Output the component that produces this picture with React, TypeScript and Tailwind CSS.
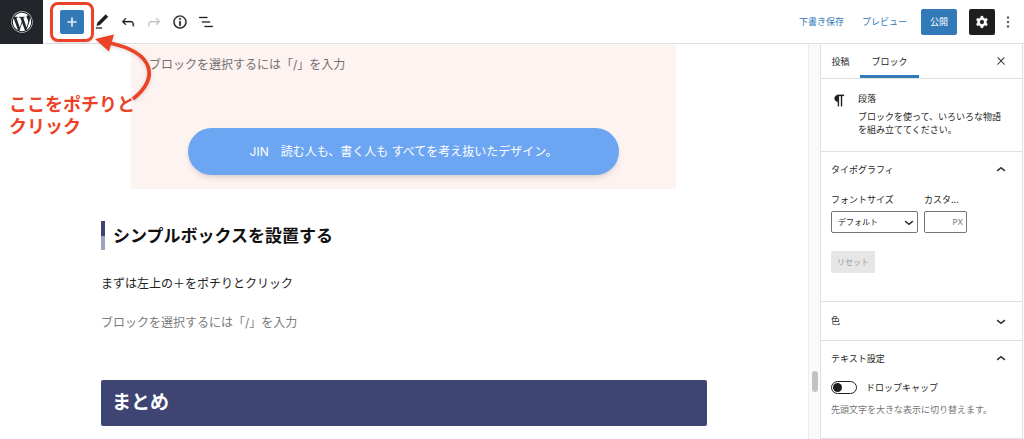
import React from "react";
import { FaWordpress } from "react-icons/fa";

const paths = {
  plus: "M18 11.2h-5.2V6h-1.6v5.2H6v1.6h5.2V18h1.6v-5.2H18z",
  edit: "M20.1 5.1L16.9 2 6.2 12.7l-1.3 4.4 4.5-1.3L20.1 5.1zM4 20.8h8v-1.5H4v1.5z",
  undo: "M18.3 11.7c-.6-.6-1.4-.9-2.3-.9H6.7l2.9-3.3-1.1-1-4.5 5L8.5 16l1-1-2.7-2.7H16c.5 0 .9.2 1.3.5 1 1 1 3.4 1 4.5v.3h1.5v-.2c0-1.5 0-4.3-1.5-5.7z",
  redo: "M15.6 6.5l-1.1 1 2.9 3.3H8c-.9 0-1.7.3-2.3.9-1.4 1.5-1.4 4.2-1.4 5.6v.2h1.5v-.3c0-1.1 0-3.5 1-4.5.3-.3.7-.5 1.3-.5h9.2L14.5 15l1.1 1.1 4.6-4.6-4.6-5z",
  info: "M12 3.2c-4.8 0-8.8 3.9-8.8 8.8 0 4.8 3.9 8.8 8.8 8.8 4.8 0 8.8-3.9 8.8-8.8 0-4.8-4-8.8-8.8-8.8zm0 16c-4 0-7.2-3.3-7.2-7.2C4.8 8 8 4.8 12 4.8s7.2 3.3 7.2 7.2c0 4-3.2 7.2-7.2 7.2zM11 17h2v-6h-2v6zm0-8h2V7h-2v2z",
  list: "M13.8 5.2H3v1.5h10.8V5.2zm-3.6 12v1.5H21v-1.5H10.2zm7.2-6H6.6v1.5h10.8v-1.5z",
  cog: "M10.289 4.836A1 1 0 0111.275 4h1.306a1 1 0 01.987.836l.244 1.466c.787.26 1.503.679 2.108 1.218l1.393-.522a1 1 0 011.216.437l.653 1.13a1 1 0 01-.23 1.273l-1.148.944a6.025 6.025 0 010 2.435l1.149.946a1 1 0 01.23 1.272l-.653 1.13a1 1 0 01-1.216.437l-1.394-.522c-.605.54-1.32.958-2.108 1.218l-.244 1.466a1 1 0 01-.987.836h-1.306a1 1 0 01-.986-.836l-.244-1.466a5.995 5.995 0 01-2.108-1.218l-1.394.522a1 1 0 01-1.217-.436l-.653-1.131a1 1 0 01.23-1.272l1.149-.946a6.026 6.026 0 010-2.435l-1.148-.944a1 1 0 01-.23-1.272l.653-1.131a1 1 0 011.217-.437l1.393.522a5.994 5.994 0 012.108-1.218l.244-1.466zM14.929 12a3 3 0 11-6 0 3 3 0 016 0z",
  more: "M13 19h-2v-2h2v2zm0-6h-2v-2h2v2zm0-6h-2V5h2v2z",
  close: "M13 11.8l6.1-6.3-1-1-6.1 6.2-6.1-6.2-1 1 6.1 6.3-6.5 6.7 1 1 6.5-6.6 6.5 6.6 1-1z",
  up: "M6.5 12.4L12 8l5.5 4.4-.9 1.2L12 10l-4.5 3.6-1-1.2z",
  down: "M17.5 11.6L12 16l-5.5-4.4.9-1.2L12 14l4.5-3.6 1 1.2z",
  paragraph: "M18.3 4H9.9v-.1l-.9.2c-2.3.4-4 2.4-4 4.8s1.7 4.4 4 4.8l.7.1V20h1.5V5.5h2.9V20h1.5V5.5h2.7V4z",
};

function Icon({ name, className = "size-[18px]" }: { name: keyof typeof paths; className?: string }) {
  return (
    <svg viewBox="0 0 24 24" fill="currentColor" fillRule="evenodd" stroke="currentColor" strokeWidth="0.4" className={className} aria-hidden="true">
      <path d={paths[name]} />
    </svg>
  );
}

function ToolButton({ name, label, disabled }: { name: keyof typeof paths; label: string; disabled?: boolean }) {
  return (
    <button type="button" aria-label={label} disabled={disabled} className="grid h-6 w-[26px] place-items-center disabled:text-[#c4c4c4]">
      <Icon name={name} />
    </button>
  );
}

function PanelTitle({ title, open }: { title: string; open: boolean }) {
  return (
    <h2>
      <button type="button" aria-expanded={open} className="flex h-[35px] w-full items-center justify-between pr-3 pl-[10px]">
        {title}
        <Icon name={open ? "up" : "down"} />
      </button>
    </h2>
  );
}

function Header() {
  return (
    <header className="flex h-11 shrink-0 items-center border-b border-[#dfdfdf] bg-white">
      <a href="#dashboard" aria-label="WordPress" className="grid h-11 w-[43px] shrink-0 place-items-center bg-[#22262b] text-white">
        <FaWordpress className="size-[22px]" />
      </a>
      <div className="relative ml-[17px]">
        <button type="button" aria-label="ブロックを追加" className="grid size-6 place-items-center rounded-[2px] bg-[#3279b7] text-white">
          <Icon name="plus" />
        </button>
        <span className="pointer-events-none absolute -inset-x-[10px] -inset-y-2 rounded-lg border-[3px] border-[#ec4328] shadow-sm" />
      </div>
      <div className="ml-[5px] flex">
        <ToolButton name="edit" label="ツール" />
        <ToolButton name="undo" label="元に戻す" />
        <ToolButton name="redo" label="やり直す" disabled />
        <ToolButton name="info" label="詳細" />
        <ToolButton name="list" label="リスト表示" />
      </div>
      <div className="ml-auto flex items-center text-[9px]">
        <button type="button" className="text-[#3279b7]">下書き保存</button>
        <button type="button" className="ml-[18px] text-[#3279b7]">プレビュー</button>
        <button type="button" className="ml-[14px] h-[26px] w-9 rounded-[2px] bg-[#3279b7] text-white">公開</button>
        <button type="button" aria-label="設定" className="ml-3 grid size-[26px] place-items-center rounded-[2px] bg-[#1e1e1e] text-white">
          <Icon name="cog" />
        </button>
        <button type="button" aria-label="オプション" className="mr-[7px] ml-1 grid h-[26px] w-[18px] place-items-center">
          <Icon name="more" />
        </button>
      </div>
    </header>
  );
}

function Editor() {
  return (
    <main className="min-w-0 flex-1 overflow-hidden bg-white px-[101px] text-[12px] leading-5">
      <section className="mr-[31px] ml-[30px] h-[145px] bg-[#fdf3f0] pt-[11px]">
        <p className="pl-[18px] text-[#757070]">ブロックを選択するには「/」を入力</p>
        <a href="#jin" className="mx-[57px] mt-[53px] flex h-[47px] items-center justify-center rounded-full bg-[#6ca5f1] text-white shadow-md">
          JIN　読む人も、書く人も すべてを考え抜いたデザイン。
        </a>
      </section>
      <h3 className="mt-8 flex h-[29px] items-center text-[17px] font-bold text-[#111111]">
        <span className="mr-2 flex h-full w-1 flex-col">
          <span className="flex-1 bg-[#3e4573]" />
          <span className="flex-1 bg-[#9fa3bf]" />
        </span>
        シンプルボックスを設置する
      </h3>
      <p className="mt-6 text-[#222222]">まずは左上の＋をポチりとクリック</p>
      <p className="mt-[19px] text-[#7b7b7b]">ブロックを選択するには「/」を入力</p>
      <h2 className="mt-[47px] flex h-[46px] items-center rounded-[2px] bg-[#3e4573] pl-[11px] text-[19px] font-bold text-white">まとめ</h2>
    </main>
  );
}

function Sidebar() {
  return (
    <aside className="mr-px w-[203px] shrink-0 overflow-hidden border-x border-[#e0e0e0] bg-white text-[9px] leading-[13px] text-[#1e1e1e]">
      <div className="flex h-[35px] items-stretch border-b border-[#e0e0e0]">
        <button type="button" className="w-[39px]">投稿</button>
        <button type="button" className="w-[59px] border-b-[3px] border-[#3279b7] pt-[3px]">ブロック</button>
        <button type="button" aria-label="設定を閉じる" className="mr-3 ml-auto grid w-[18px] place-items-center">
          <Icon name="close" className="size-3" />
        </button>
      </div>
      <section className="flex h-[73px] border-b border-[#e0e0e0] pt-[13px] pl-[10px]">
        <Icon name="paragraph" className="size-[17px] shrink-0" />
        <div className="ml-[10px]">
          <h2>段落</h2>
          <p className="mt-[5px]">ブロックを使って、いろいろな物語<br />を組み立ててください。</p>
        </div>
      </section>
      <section className="h-[150px] border-b border-[#e0e0e0]">
        <PanelTitle title="タイポグラフィ" open />
        <div className="flex gap-[6px] pt-[6px] pl-[10px]">
          <div className="w-[87px]">
            <label htmlFor="size" className="block">フォントサイズ</label>
            <div className="relative mt-[5px]">
              <select id="size" className="h-[22px] w-full appearance-none rounded-[2px] border border-[#757575] bg-white pl-[6px] text-[8px]">
                <option>デフォルト</option>
              </select>
              <Icon name="down" className="pointer-events-none absolute top-[2px] right-0 size-[18px]" />
            </div>
          </div>
          <div className="w-[43px]">
            <label htmlFor="custom" className="block">カスタ...</label>
            <div className="relative mt-[5px]">
              <input id="custom" type="text" className="h-[22px] w-full rounded-[2px] border border-[#757575] pr-4 pl-1" />
              <span className="pointer-events-none absolute top-[5px] right-1 text-[8px] text-[#757575]">PX</span>
            </div>
          </div>
        </div>
        <button type="button" disabled className="mt-[18px] ml-[10px] h-[22px] w-11 rounded-[1px] bg-[#e6e6e6] text-[8px] text-[#9a9a9a]">リセット</button>
      </section>
      <section className="border-b border-[#e0e0e0] pt-px pb-[2px]">
        <PanelTitle title="色" open={false} />
      </section>
      <section className="h-[98px] border-b border-[#e0e0e0]">
        <PanelTitle title="テキスト設定" open />
        <label className="flex items-center gap-[9px] pt-[5px] pl-[10px]">
          <input
            type="checkbox"
            className="h-[13px] w-[26px] appearance-none rounded-full border border-[#1e1e1e] bg-white p-px before:block before:size-[9px] before:rounded-full before:bg-[#1e1e1e] checked:before:ml-auto"
          />
          ドロップキャップ
        </label>
        <p className="mt-[9px] pl-[10px] whitespace-nowrap text-[#757575]">先頭文字を大きな表示に切り替えます。</p>
      </section>
    </aside>
  );
}

export default function App() {
  return (
    <div className="relative flex h-screen flex-col overflow-hidden bg-white font-['Inter','Noto_Sans_CJK_JP',sans-serif] text-[#1e1e1e]">
      <Header />
      <div className="flex min-h-0 flex-1">
        <Editor />
        <div className="flex w-3 shrink-0 flex-col items-center border-l border-[#ededed] bg-[#fafafa]">
          <div className="mt-[327px] h-[21px] w-[6px] rounded-full bg-[#c2c2c2]" />
        </div>
        <Sidebar />
      </div>
      <svg viewBox="0 0 70 70" className="pointer-events-none absolute top-9 left-[90px] size-[70px] overflow-visible drop-shadow-sm" aria-hidden="true">
        <path d="M43 63C69 42 65 17 20 7" fill="none" stroke="#ec4328" strokeWidth="3.8" />
        <path d="M5 3L24-1.5L19 15.5Z" fill="#ec4328" />
      </svg>
      <p className="pointer-events-none absolute top-[94px] left-[9px] text-[18px] leading-[22px] font-bold text-[#ec4328]">
        ここをポチりと<br />クリック
      </p>
    </div>
  );
}
